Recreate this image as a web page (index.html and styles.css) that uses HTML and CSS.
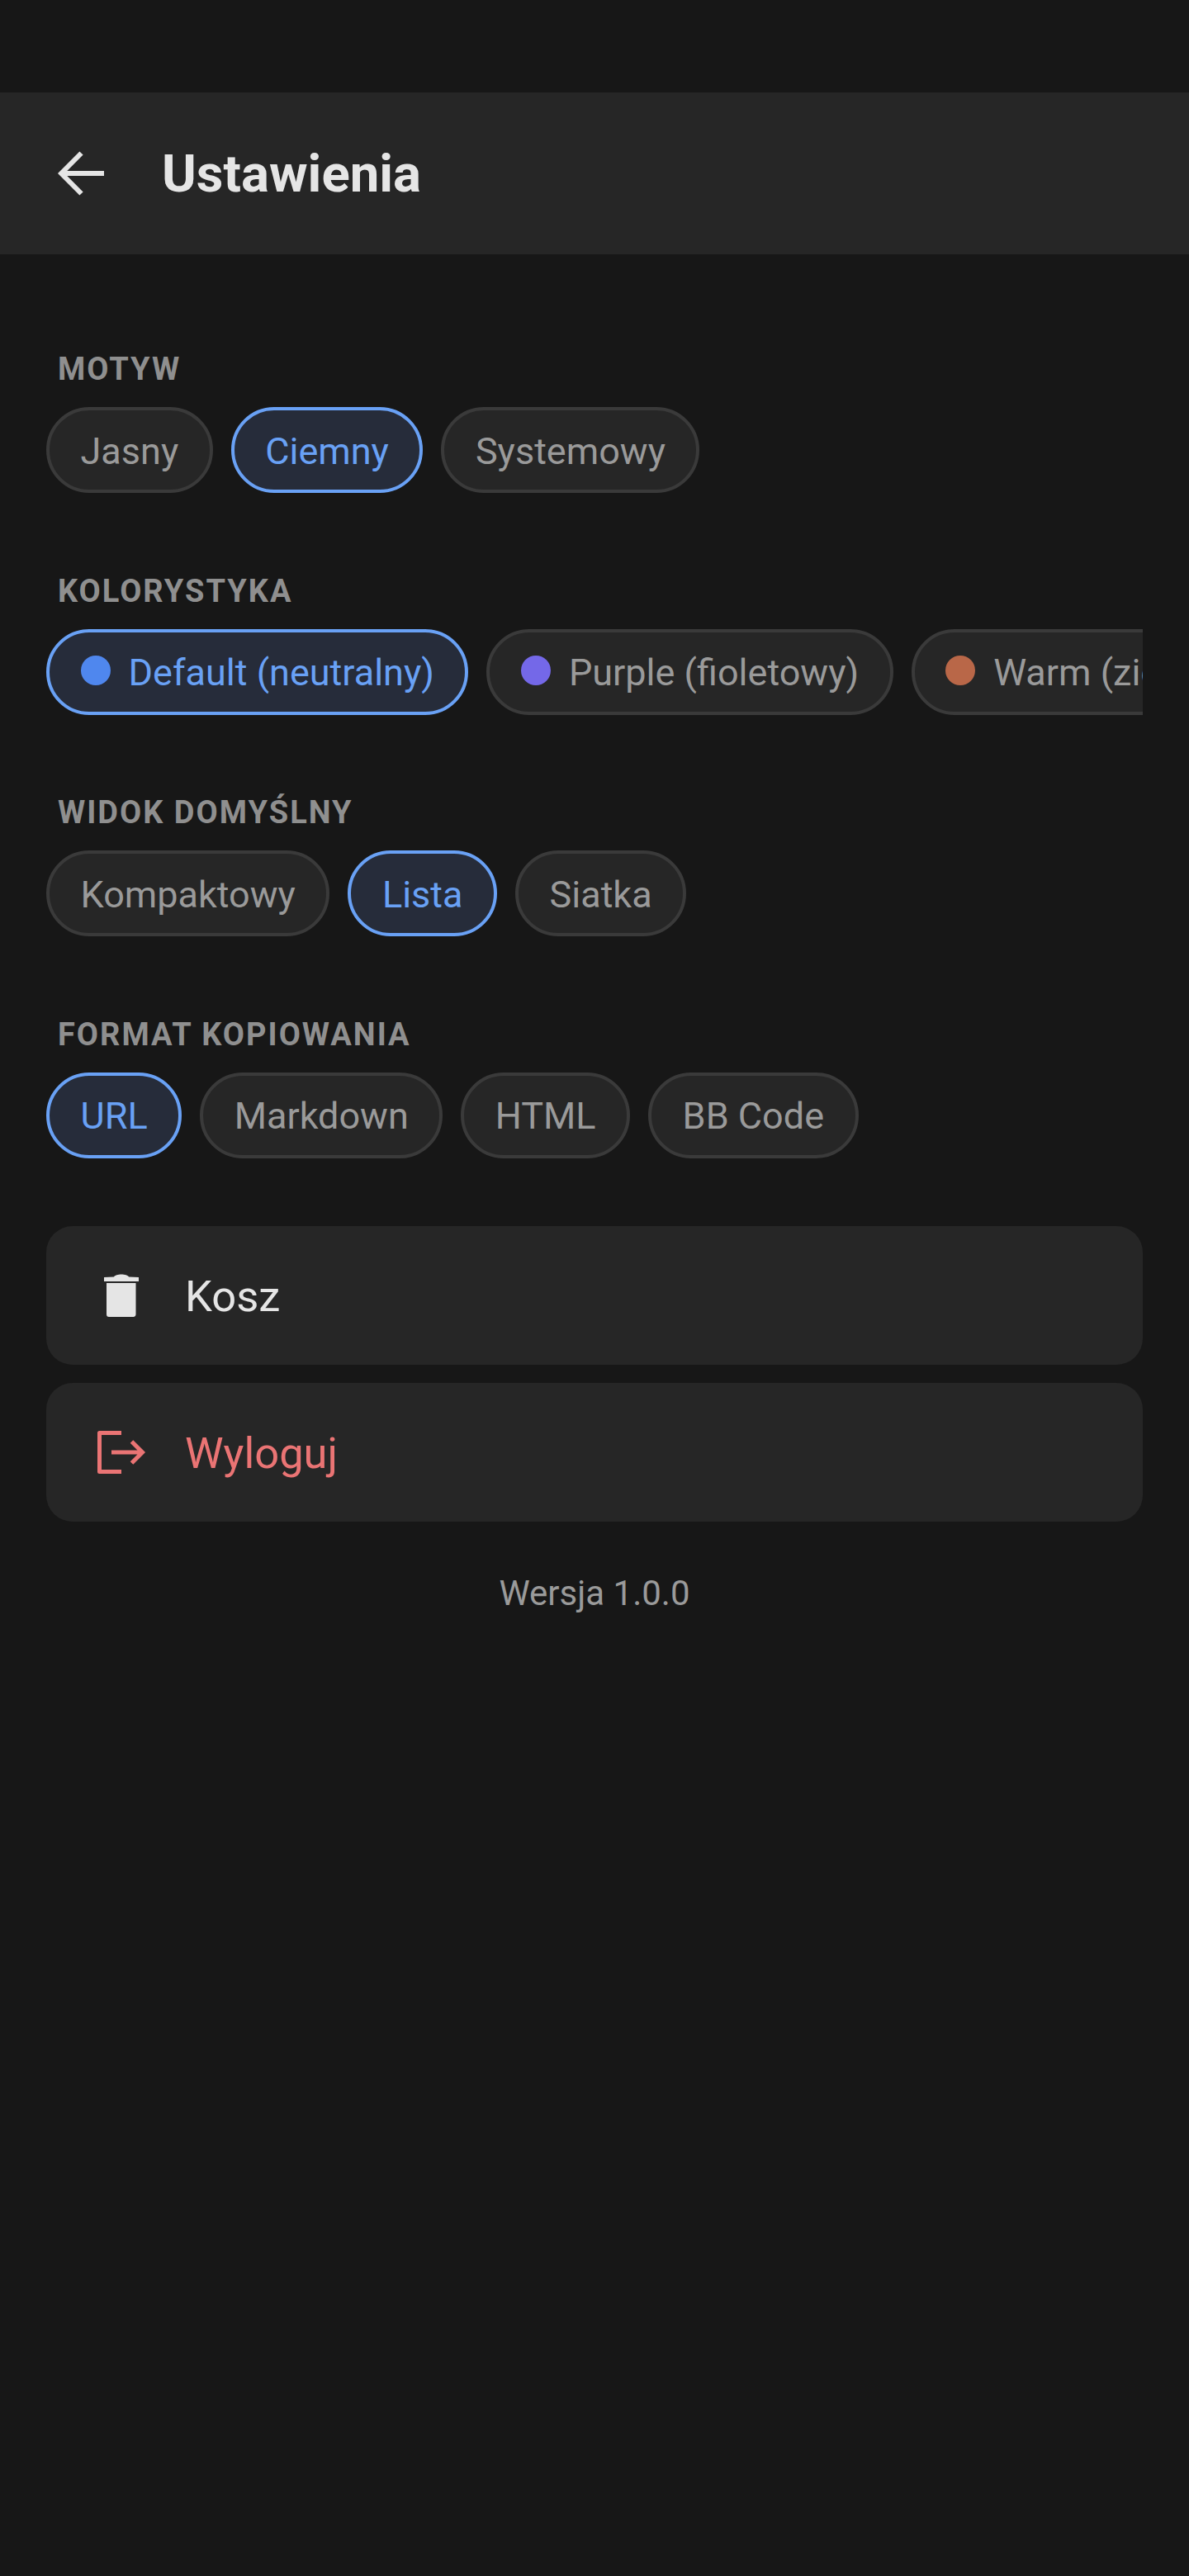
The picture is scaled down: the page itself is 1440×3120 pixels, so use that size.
FILE: index.html

```html
<!DOCTYPE html>
<html lang="pl">
<head>
  <meta charset="UTF-8" />
  <meta name="viewport" content="width=device-width, initial-scale=1.0"/>
  <title>Ustawienia</title>
  <link rel="stylesheet" href="styles.css">
</head>
<body>
  <header class="top-bar">
    <svg class="back-icon" viewBox="0 0 56 56" width="56" height="56">
      <path d="M56 28H6M28.500 3.500L4.200 28L28.500 52.500" fill="none" stroke="#e5e5e5" stroke-width="6"/>
    </svg>
    <h1>Ustawienia</h1>
  </header>

  <main class="content">
    <section class="group">
      <div class="group-label">MOTYW</div>
      <div class="chips">
        <div class="chip">Jasny</div>
        <div class="chip active">Ciemny</div>
        <div class="chip">Systemowy</div>
      </div>
    </section>

    <section class="group">
      <div class="group-label">KOLORYSTYKA</div>
      <div class="chips">
        <div class="chip active"><span class="dot dot-blue"></span>Default (neutralny)</div>
        <div class="chip"><span class="dot dot-purple"></span>Purple (fioletowy)</div>
        <div class="chip"><span class="dot dot-warm"></span>Warm (ziemisty)</div>
      </div>
    </section>

    <section class="group">
      <div class="group-label">WIDOK DOMYŚLNY</div>
      <div class="chips">
        <div class="chip">Kompaktowy</div>
        <div class="chip active">Lista</div>
        <div class="chip">Siatka</div>
      </div>
    </section>

    <section class="group">
      <div class="group-label">FORMAT KOPIOWANIA</div>
      <div class="chips">
        <div class="chip active">URL</div>
        <div class="chip">Markdown</div>
        <div class="chip">HTML</div>
        <div class="chip">BB Code</div>
      </div>
    </section>

    <div class="row-card">
      <span class="row-icon">
        <svg viewBox="0 0 60 60" width="60" height="60">
          <path d="M9 8L21 7.500C23 3.500 37 3.500 39 7.500L51 8V13H9Z M12 15H47.500V53C47.500 55 46 56 44.500 56H15C13 56 12 55 12 53Z" fill="#e5e5e5"/>
        </svg>
      </span>
      <span class="row-text">Kosz</span>
    </div>
    <div class="row-card danger">
      <span class="row-icon">
        <svg viewBox="0 0 60 60" width="60" height="60">
          <path d="M30 6.500H3.500V53.500H30" fill="none" stroke="#ea7474" stroke-width="5" stroke-linejoin="round"/>
          <path d="M18 30H55M42.500 17L55.500 30L42.500 43" fill="none" stroke="#ea7474" stroke-width="5"/>
        </svg>
      </span>
      <span class="row-text">Wyloguj</span>
    </div>

    <p class="version">Wersja 1.0.0</p>
  </main>
</body>
</html>
```

FILE: styles.css

```css
* {
  box-sizing: border-box;
}
body {
  margin: 0;
  min-height: 3120px;
  padding-top: 112px;
  background: #171717;
  color: #e5e5e5;
  font-family: Roboto, "Liberation Sans", sans-serif;
}

.top-bar {
  height: 196px;
  display: flex;
  align-items: center;
  gap: 70px;
  padding-left: 70px;
  background: #262626;
}

.top-bar h1 {
  margin: 0;
  font-size: 63.500px;
  font-weight: 700;
  color: #e5e5e5;
}

.back-icon {
  flex-shrink: 0;
}

.content {
  padding: 120px 56px 0;
}

.group {
  margin-bottom: 99.670px;
}

.group:last-of-type {
  margin-bottom: 82px;
}

.group-label {
  padding-left: 14px;
  height: 38px;
  line-height: 38px;
  margin-bottom: 27px;
  font-size: 38px;
  font-weight: 700;
  letter-spacing: 2px;
  color: #8f8f8f;
}

.chips {
  display: flex;
  gap: 22px;
  overflow: hidden;
}

.chip {
  flex-shrink: 0;
  height: 104px;
  display: flex;
  align-items: center;
  gap: 22px;
  padding: 2px 37.500px 0;
  background: #262626;
  border: 4px solid #3a3a3a;
  border-radius: 52px;
  font-size: 45px;
  color: #9a9a9a;
  white-space: nowrap;
}

.chip.active {
  background: #262c3a;
  border-color: #69a1f5;
  color: #69a1f5;
}

.dot {
  width: 36px;
  height: 36px;
  margin-bottom: 6px;
  border-radius: 50%;
}
.dot-blue { background: #4f87ee; }
.dot-purple { background: #7468e8; }
.dot-warm { background: #b96748; }

.row-card {
  height: 168px;
  display: flex;
  align-items: center;
  gap: 47px;
  padding-left: 61px;
  margin-bottom: 22px;
  background: #262626;
  border-radius: 32px;
  font-size: 52.500px;
  color: #e5e5e5;
}

.row-card.danger {
  color: #ea7474;
}

.row-text {
  padding-top: 2px;
}

.row-icon {
  width: 60px;
  height: 60px;
  flex-shrink: 0;
}

.row-icon svg {
  display: block;
}

.version {
  margin: 62px 0 0;
  text-align: center;
  font-size: 42px;
  color: #9a9a9a;
}
```
